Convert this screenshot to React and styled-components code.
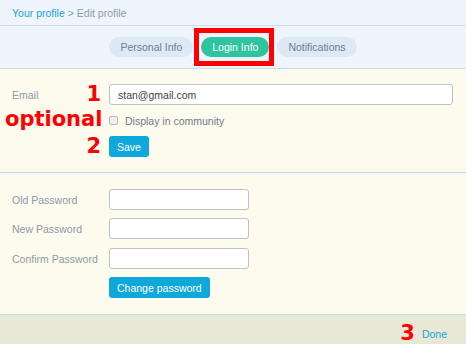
import React from "react";
import styled, { createGlobalStyle } from "styled-components";

const Global = createGlobalStyle`
  html, body { margin: 0; padding: 0; background: #fdfaee; overflow: hidden; }
  body { font-family: "Liberation Sans", Arial, sans-serif; font-size: 10.5px; }
  * { box-sizing: border-box; }
`;

const Page = styled.div`
  width: 466px;
  height: 344px;
  display: flex;
  flex-direction: column;
  background: #fdfaee;
`;

const Header = styled.div`
  height: 26px;
  background: #eef5fc;
  border-bottom: 1px solid #c9dcee;
  padding: 0 12px;
  display: flex;
  align-items: center;
  color: #8d9ba8;
  font-size: 10.5px;
`;

const Crumb = styled.span`
  color: #1ba3da;
  margin-right: 3px;
`;

const TabBar = styled.div`
  height: 43px;
  background: #eef5fc;
  border-bottom: 1px solid #c9dcee;
  display: flex;
  justify-content: center;
  align-items: center;
  gap: 8px;
  padding-bottom: 1px;
`;

const Tab = styled.div`
  position: relative;
  height: 20px;
  padding: 0 11px;
  border-radius: 10px;
  display: flex;
  align-items: center;
  font-size: 10.5px;
  background: ${(p) => (p.$active ? "#2dc49f" : "#dde9f6")};
  color: ${(p) => (p.$active ? "#ffffff" : "#6d7d8b")};
  ${(p) =>
    p.$marked &&
    `
    &::after {
      content: "";
      position: absolute;
      top: -9px;
      bottom: -9px;
      left: -7px;
      right: -5px;
      border: 5px solid #ff0000;
    }
  `}
`;

const Section = styled.div`
  padding: ${(p) => p.$pad};
  border-bottom: 1px solid #bfd9ee;
  display: flex;
  flex-direction: column;
  gap: 8px;
`;

const Row = styled.div`
  display: flex;
  align-items: center;
  height: ${(p) => p.$h || "21px"};
  margin-top: ${(p) => p.$mt || "0"};
`;

const LabelCell = styled.div`
  width: 109px;
  flex: none;
  display: flex;
  align-items: center;
  justify-content: space-between;
  padding-right: 8px;
  padding-left: ${(p) => p.$pl || "12px"};
`;

const Label = styled.span`
  color: #8c9aa7;
  font-size: 10.5px;
`;

const Mark = styled.span`
  color: #ff0000;
  font-family: "DejaVu Sans", Verdana, sans-serif;
  font-weight: bold;
  font-size: 21px;
  line-height: 1;
  margin-left: auto;
`;

const Optional = styled(Mark)`
  margin-left: 0;
  margin-top: -3px;
`;

const Input = styled.input`
  width: ${(p) => p.$w};
  height: 21px;
  border: 1px solid #bcc3c8;
  border-radius: 3px;
  background: #fff;
  padding: 0 8px;
  font-family: "Liberation Sans", Arial, sans-serif;
  font-size: 10.5px;
  color: #444;
  outline: none;
`;

const CheckRow = styled.label`
  display: flex;
  align-items: center;
  gap: 7px;
  color: #6f7c88;
  font-size: 10.5px;
`;

const Box = styled.span`
  width: 9px;
  height: 9px;
  border: 1px solid #b8b8b8;
  border-radius: 2px;
  background: #efefef;
  display: inline-block;
`;

const Button = styled.button`
  height: 21px;
  padding: 0 8px;
  border: none;
  border-radius: 3px;
  background: #0fa8dc;
  color: #fff;
  font-family: "Liberation Sans", Arial, sans-serif;
  font-size: 10.5px;
  cursor: pointer;
`;

const Footer = styled.div`
  flex: 1;
  background: #e7e8d6;
  display: flex;
  justify-content: flex-end;
  align-items: center;
  gap: 7px;
  padding: 8px 19px 0 0;
`;

const Done = styled.a`
  color: #1ba3da;
  font-size: 10.5px;
  text-decoration: none;
`;

const FooterMark = styled(Mark)`
  margin-left: 0;
  font-size: 21px;
`;

export default function App() {
  return (
    <Page>
      <Global />
      <Header>
        <Crumb>Your profile</Crumb>&gt; Edit profile
      </Header>
      <TabBar>
        <Tab>Personal Info</Tab>
        <Tab $active $marked>
          Login Info
        </Tab>
        <Tab>Notifications</Tab>
      </TabBar>

      <Section $pad="15px 0 15px">
        <Row>
          <LabelCell>
            <Label>Email</Label>
            <Mark>1</Mark>
          </LabelCell>
          <Input $w="344px" defaultValue="stan@gmail.com" />
        </Row>
        <Row $h="15px">
          <LabelCell $pl="5px">
            <Optional>optional</Optional>
          </LabelCell>
          <CheckRow>
            <Box />
            Display in community
          </CheckRow>
        </Row>
        <Row>
          <LabelCell>
            <Mark>2</Mark>
          </LabelCell>
          <Button>Save</Button>
        </Row>
      </Section>

      <Section $pad="16px 0 16px">
        <Row>
          <LabelCell>
            <Label>Old Password</Label>
          </LabelCell>
          <Input $w="140px" type="password" />
        </Row>
        <Row>
          <LabelCell>
            <Label>New Password</Label>
          </LabelCell>
          <Input $w="140px" type="password" />
        </Row>
        <Row $mt="1px">
          <LabelCell>
            <Label>Confirm Password</Label>
          </LabelCell>
          <Input $w="140px" type="password" />
        </Row>
        <Row>
          <LabelCell />
          <Button>Change password</Button>
        </Row>
      </Section>

      <Footer>
        <FooterMark>3</FooterMark>
        <Done href="#">Done</Done>
      </Footer>
    </Page>
  );
}
